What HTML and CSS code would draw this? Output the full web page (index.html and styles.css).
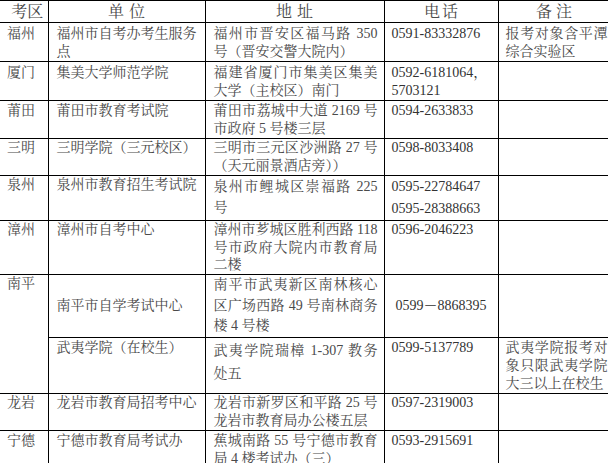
FILE: index.html
```html
<!DOCTYPE html>
<html lang="zh-CN">
<head>
<meta charset="utf-8">
<title>考区</title>
<link rel="stylesheet" href="styles.css">
</head>
<body>
<table class="t">
<colgroup><col class="c1"><col class="c2"><col class="c3"><col class="c4"><col class="c5"></colgroup>
<tr class="h">
<th><span class="hk">考区</span></th><th><span class="hs">单位</span></th><th><span class="hs">地址</span></th><th><span class="hp">电话</span></th><th><span class="hb">备注</span></th>
</tr>
<tr class="r-fz">
<td>福州</td>
<td>福州市自考办考生服务<br>点</td>
<td><span class="j">福州市晋安区福马路 350</span>号（晋安交警大院内）</td>
<td class="ph">0591-83332876</td>
<td><span class="j">报考对象含平潭</span>综合实验区</td>
</tr>
<tr class="r-xm">
<td>厦门</td>
<td>集美大学师范学院</td>
<td><span class="j">福建省厦门市集美区集美</span>大学（主校区）南门</td>
<td class="ph">0592-6181064，<br>5703121</td>
<td></td>
</tr>
<tr class="r-pt">
<td>莆田</td>
<td>莆田市教育考试院</td>
<td><span class="j">莆田市荔城中大道 2169 号</span>市政府 5 号楼三层</td>
<td class="ph">0594-2633833</td>
<td></td>
</tr>
<tr class="r-sm">
<td>三明</td>
<td>三明学院（三元校区）</td>
<td><span class="j">三明市三元区沙洲路 27 号</span>（天元丽景酒店旁））</td>
<td class="ph">0598-8033408</td>
<td></td>
</tr>
<tr class="r-qz">
<td>泉州</td>
<td>泉州市教育招生考试院</td>
<td class="lh21"><span class="j">泉州市鲤城区崇福路 225</span>号</td>
<td class="ph lh22">0595-22784647<br>0595-28388663</td>
<td></td>
</tr>
<tr class="r-zz">
<td>漳州</td>
<td>漳州市自考中心</td>
<td class="lh17"><span class="j">漳州市芗城区胜利西路 118</span><span class="j">号市政府大院内市教育局</span>二楼</td>
<td class="ph">0596-2046223</td>
<td></td>
</tr>
<tr class="r-np">
<td rowspan="2">南平</td>
<td class="mid">南平市自学考试中心</td>
<td class="lh20"><span class="j">南平市武夷新区南林核心</span><span class="j">区广场西路 49 号南林商务</span>楼 4 号楼</td>
<td class="ph mid np">0599－8868395</td>
<td></td>
</tr>
<tr class="r-wy">
<td>武夷学院（在校生）</td>
<td class="lh23"><span class="j">武夷学院瑞樟 1-307 教务</span>处五</td>
<td class="ph">0599-5137789</td>
<td><span class="j">武夷学院报考对</span><span class="j">象只限武夷学院</span>大三以上在校生</td>
</tr>
<tr class="r-ly">
<td>龙岩</td>
<td>龙岩市教育局招考中心</td>
<td><span class="j">龙岩市新罗区和平路 25 号</span>龙岩市教育局办公楼五层</td>
<td class="ph">0597-2319003</td>
<td></td>
</tr>
<tr class="r-nd">
<td>宁德</td>
<td>宁德市教育局考试办</td>
<td><span class="j">蕉城南路 55 号宁德市教育</span>局 4 楼考试办（三）</td>
<td class="ph">0593-2915691</td>
<td></td>
</tr>
</table>
</body>
</html>
```
FILE: styles.css
```css
html, body {
  margin: 0;
  padding: 0;
  background: #ffffff;
  overflow: hidden;
}

.t {
  border-collapse: collapse;
  table-layout: fixed;
  width: 610px;
  font-family: "Liberation Serif", "Noto Serif CJK SC", "Noto Sans CJK SC", serif;
  font-size: 14px;
  line-height: 18px;
  color: #4a4a4a;
}

.c1 { width: 48px; }
.c2 { width: 157px; }
.c3 { width: 179px; }
.c4 { width: 114px; }
.c5 { width: 112px; }

.t th,
.t td {
  border: 1px solid #000;
  padding: 1px 6px 0 8px;
  vertical-align: top;
  text-align: left;
  font-weight: normal;
  overflow: hidden;
}

.t th:first-child,
.t td:first-child {
  border-left: none;
  padding-left: 7px;
}

.t td:last-child {
  padding-left: 7px;
  padding-right: 2px;
}

.t th {
  font-size: 16px;
  line-height: 20px;
  padding: 1px 0 0 0;
  text-align: center;
  vertical-align: middle;
}

.t .r-wy td:first-child {
  border-left: 1px solid #000;
  padding-left: 8px;
}

.hk { letter-spacing: 0; }
.hs { letter-spacing: 5px; margin-right: -5px; }
.hp { letter-spacing: 2px; margin-right: -2px; }
.hb { letter-spacing: 4px; margin-right: -4px; }

.j {
  display: block;
  text-align: justify;
  text-align-last: justify;
}

.t td.ph { padding-left: 7px; color: #333; }
.t td.np { padding-left: 11px; }
.t td.mid { vertical-align: middle; }
.t td.lh17 { line-height: 17.6px; }
.t td.lh20 { line-height: 20.6px; }
.t td.lh21 { line-height: 21px; }
.t td.lh22 { line-height: 22px; }
.t td.lh23 { line-height: 23px; }

.h th { height: 20px; }
.r-fz td { padding-top: 2px; height: 35px; }
.r-xm td { padding-top: 2px; height: 36px; }
.r-pt td { padding-top: 1px; height: 36px; }
.r-sm td { padding-top: 0; height: 36px; }
.r-qz td { padding-top: 0; height: 44px; }
.r-zz td { padding-top: 0; height: 53px; }
.r-np td { padding-top: 0; height: 62px; }
.r-wy td { padding-top: 1px; height: 54px; }
.r-ly td { padding-top: 0; height: 36px; }
.r-nd td { padding-top: 1px; height: 36px; }
```
